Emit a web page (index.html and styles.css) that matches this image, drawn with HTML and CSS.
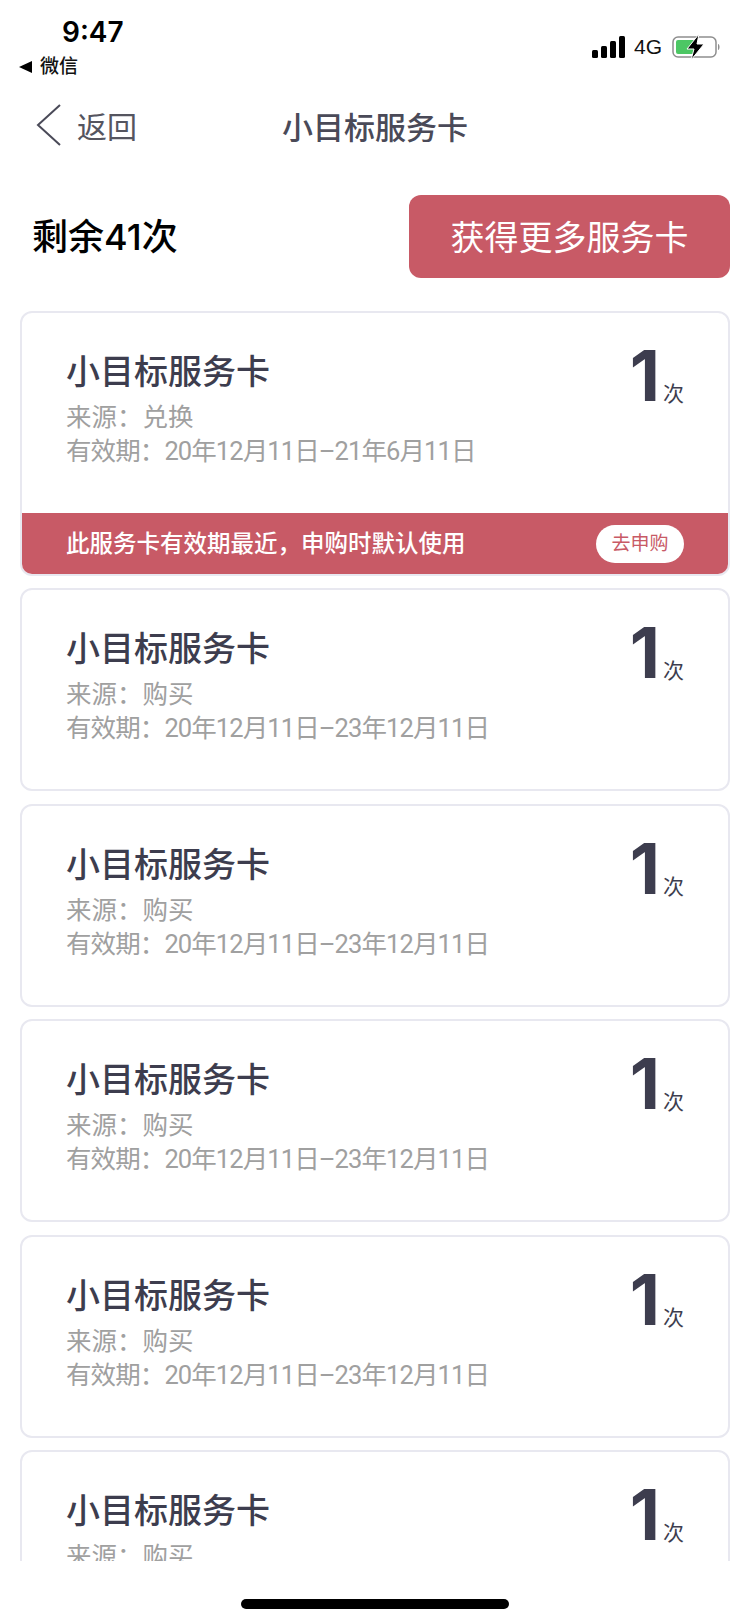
FILE: index.html
```html
<!DOCTYPE html>
<html lang="zh-CN">
<head>
  <meta charset="UTF-8">
  <meta name="viewport" content="width=device-width, initial-scale=1.0">
  <title>小目标服务卡</title>
  <link rel="stylesheet" href="styles.css">
</head>
<body>
  <div class="status-bar">
    <div class="status-left">
      <div class="time">9:47</div>
      <div class="from"><span class="from-arrow"></span>微信</div>
    </div>
    <div class="status-right">
      <svg class="signal" width="34" height="22" viewBox="0 0 34 22">
        <rect x="0" y="14" width="6" height="8" rx="1.5"/>
        <rect x="9" y="10" width="6" height="12" rx="1.5"/>
        <rect x="18" y="5" width="6" height="17" rx="1.5"/>
        <rect x="27" y="0" width="6" height="22" rx="1.5"/>
      </svg>
      <span class="network">4G</span>
      <svg class="battery" width="50" height="26" viewBox="0 0 50 26">
        <rect x="1" y="3" width="43" height="20" rx="5" fill="none" stroke="#8e8e8e" stroke-width="1.5"/>
        <rect x="4" y="6" width="19" height="14" rx="2" fill="#4cc764"/>
        <path d="M46 10c2 .4 2 5.600 0 6z" fill="#8e8e8e"/>
        <path d="M27 0 L15 15 L22 15 L19 26 L32 10 L25 10 Z" fill="#000" stroke="#fff" stroke-width="1"/>
      </svg>
    </div>
  </div>

  <div class="nav">
    <svg class="back" width="26" height="42" viewBox="0 0 26 42">
      <path d="M24 1 L2 21 L24 41" fill="none" stroke="#4a4a58" stroke-width="2"/>
    </svg>
    <span class="back-text">返回</span>
    <span class="nav-title">小目标服务卡</span>
  </div>

  <div class="summary">
    <div class="remain">剩余41次</div>
    <button class="more-btn" type="button">获得更多服务卡</button>
  </div>

  <div class="list">
    <div class="card">
      <div class="card-body">
        <div class="card-info">
          <div class="card-title">小目标服务卡</div>
          <div class="card-meta">来源：兑换</div>
          <div class="card-meta card-date">有效期：20年12月11日–21年6月11日</div>
        </div>
        <div class="count"><span class="count-num">1</span><span class="count-unit">次</span></div>
      </div>
      <div class="card-notice">
        <span class="notice-text">此服务卡有效期最近，申购时默认使用</span>
        <span class="notice-btn">去申购</span>
      </div>
    </div>

    <div class="card">
      <div class="card-body">
        <div class="card-info">
          <div class="card-title">小目标服务卡</div>
          <div class="card-meta">来源：购买</div>
          <div class="card-meta card-date">有效期：20年12月11日–23年12月11日</div>
        </div>
        <div class="count"><span class="count-num">1</span><span class="count-unit">次</span></div>
      </div>
    </div>

    <div class="card">
      <div class="card-body">
        <div class="card-info">
          <div class="card-title">小目标服务卡</div>
          <div class="card-meta">来源：购买</div>
          <div class="card-meta card-date">有效期：20年12月11日–23年12月11日</div>
        </div>
        <div class="count"><span class="count-num">1</span><span class="count-unit">次</span></div>
      </div>
    </div>

    <div class="card">
      <div class="card-body">
        <div class="card-info">
          <div class="card-title">小目标服务卡</div>
          <div class="card-meta">来源：购买</div>
          <div class="card-meta card-date">有效期：20年12月11日–23年12月11日</div>
        </div>
        <div class="count"><span class="count-num">1</span><span class="count-unit">次</span></div>
      </div>
    </div>

    <div class="card">
      <div class="card-body">
        <div class="card-info">
          <div class="card-title">小目标服务卡</div>
          <div class="card-meta">来源：购买</div>
          <div class="card-meta card-date">有效期：20年12月11日–23年12月11日</div>
        </div>
        <div class="count"><span class="count-num">1</span><span class="count-unit">次</span></div>
      </div>
    </div>

    <div class="card">
      <div class="card-body">
        <div class="card-info">
          <div class="card-title">小目标服务卡</div>
          <div class="card-meta">来源：购买</div>
          <div class="card-meta card-date">有效期：20年12月11日–23年12月11日</div>
        </div>
        <div class="count"><span class="count-num">1</span><span class="count-unit">次</span></div>
      </div>
    </div>
  </div>

  <div class="home-area">
    <div class="home-bar"></div>
  </div>
</body>
</html>
```

FILE: styles.css
```css
* {
  box-sizing: border-box;
}
html, body {
  margin: 0;
  padding: 0;
}
body {
  width: 750px;
  height: 1623px;
  overflow: hidden;
  background-color: #fff;
  font-family: Inter, "Noto Sans CJK SC", sans-serif;
  color: #3d3d4e;
}
.status-bar {
  height: 85px;
  display: flex;
  justify-content: space-between;
  padding: 16px 28px 0 19px;
}
.time {
  font-size: 28px;
  line-height: 32px;
  font-weight: 600;
  color: #000;
  margin-left: 43px;
}
.from {
  display: flex;
  align-items: center;
  font-size: 19px;
  line-height: 24px;
  font-weight: 500;
  color: #111;
  margin-top: 7px;
}
.from-arrow {
  width: 0;
  height: 0;
  border-top: 6px solid transparent;
  border-bottom: 6px solid transparent;
  border-right: 13px solid #000;
  margin-right: 8px;
}
.status-right {
  display: flex;
  align-items: center;
  height: 26px;
  margin-top: 18px;
}
.signal {
  margin-right: 8px;
}
.network {
  font-family: "Liberation Sans", sans-serif;
  font-size: 21px;
  color: #111;
  margin-right: 10px;
}
.nav {
  height: 80px;
  display: flex;
  align-items: center;
  padding-left: 36px;
}
.back {
  margin-right: 15px;
}
.back-text {
  font-size: 30px;
  color: #55555f;
}
.nav-title {
  margin-left: 145px;
  font-size: 31px;
  font-weight: 500;
  color: #4a4a58;
}
.summary {
  height: 83px;
  margin-top: 30px;
  display: flex;
  justify-content: space-between;
  align-items: center;
  padding: 0 20px 0 32px;
}
.remain {
  font-size: 36px;
  line-height: 48px;
  font-weight: 500;
  color: #000;
}
.more-btn {
  width: 321px;
  height: 83px;
  background-color: #c85a66;
  color: #fff;
  border: none;
  border-radius: 12px;
  font-family: inherit;
  font-size: 34px;
  padding: 0 0 2px;
}
.list {
  height: 1250px;
  margin: 33px 20px 0;
  overflow: hidden;
}
.card {
  border: 2px solid #e8e8f0;
  border-radius: 12px;
  margin-bottom: 12.4px;
  overflow: hidden;
  background-color: #fff;
}
.card-body {
  height: 199px;
  display: flex;
  justify-content: space-between;
  padding: 34px 44px 0 44px;
}
.card-title {
  font-size: 34px;
  line-height: 50px;
  font-weight: 500;
  color: #3d3d4e;
  margin-bottom: 3px;
}
.card-meta {
  font-family: Roboto, "Noto Sans CJK SC", sans-serif;
  font-size: 25.5px;
  line-height: 34px;
  color: #a0a0a0;
}
.card-date {
  letter-spacing: -0.9px;
}
.count {
  display: flex;
  align-items: flex-end;
  height: 70px;
  margin-top: -6px;
}
.count-num {
  font-size: 70px;
  line-height: 70px;
  font-weight: 700;
  color: #3d3d4e;
}
.count-unit {
  font-size: 21px;
  line-height: 26px;
  color: #3d3d4e;
  margin: 0 0 4px 3px;
}
.card-notice {
  height: 61px;
  background-color: #c85a66;
  display: flex;
  justify-content: space-between;
  align-items: center;
  padding: 0 44px;
  margin-top: 1px;
}
.notice-text {
  font-size: 23.5px;
  font-weight: 500;
  color: #fff;
  margin-top: -4px;
}
.notice-btn {
  width: 88px;
  height: 38px;
  line-height: 38px;
  border-radius: 19px;
  background-color: #fff;
  color: #c85a66;
  font-size: 19px;
  text-align: center;
}
.home-area {
  height: 62px;
  display: flex;
  justify-content: center;
  padding-top: 38px;
}
.home-bar {
  width: 268px;
  height: 10px;
  border-radius: 5px;
  background-color: #000;
}
```
